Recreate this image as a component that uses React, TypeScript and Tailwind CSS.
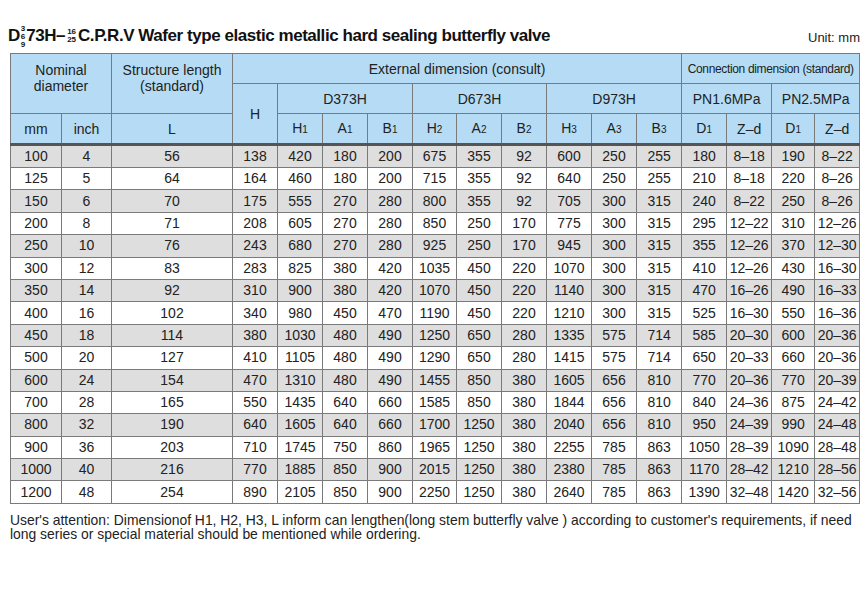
const rows: string[][] = [
  ["100", "4", "56", "138", "420", "180", "200", "675", "355", "92", "600", "250", "255", "180", "8–18", "190", "8–22"],
  ["125", "5", "64", "164", "460", "180", "200", "715", "355", "92", "640", "250", "255", "210", "8–18", "220", "8–26"],
  ["150", "6", "70", "175", "555", "270", "280", "800", "355", "92", "705", "300", "315", "240", "8–22", "250", "8–26"],
  ["200", "8", "71", "208", "605", "270", "280", "850", "250", "170", "775", "300", "315", "295", "12–22", "310", "12–26"],
  ["250", "10", "76", "243", "680", "270", "280", "925", "250", "170", "945", "300", "315", "355", "12–26", "370", "12–30"],
  ["300", "12", "83", "283", "825", "380", "420", "1035", "450", "220", "1070", "300", "315", "410", "12–26", "430", "16–30"],
  ["350", "14", "92", "310", "900", "380", "420", "1070", "450", "220", "1140", "300", "315", "470", "16–26", "490", "16–33"],
  ["400", "16", "102", "340", "980", "450", "470", "1190", "450", "220", "1210", "300", "315", "525", "16–30", "550", "16–36"],
  ["450", "18", "114", "380", "1030", "480", "490", "1250", "650", "280", "1335", "575", "714", "585", "20–30", "600", "20–36"],
  ["500", "20", "127", "410", "1105", "480", "490", "1290", "650", "280", "1415", "575", "714", "650", "20–33", "660", "20–36"],
  ["600", "24", "154", "470", "1310", "480", "490", "1455", "850", "380", "1605", "656", "810", "770", "20–36", "770", "20–39"],
  ["700", "28", "165", "550", "1435", "640", "660", "1585", "850", "380", "1844", "656", "810", "840", "24–36", "875", "24–42"],
  ["800", "32", "190", "640", "1605", "640", "660", "1700", "1250", "380", "2040", "656", "810", "950", "24–39", "990", "24–48"],
  ["900", "36", "203", "710", "1745", "750", "860", "1965", "1250", "380", "2255", "785", "863", "1050", "28–39", "1090", "28–48"],
  ["1000", "40", "216", "770", "1885", "850", "900", "2015", "1250", "380", "2380", "785", "863", "1170", "28–42", "1210", "28–56"],
  ["1200", "48", "254", "890", "2105", "850", "900", "2250", "1250", "380", "2640", "785", "863", "1390", "32–48", "1420", "32–56"],
];

const widths = [51, 50, 121, 45, 45, 45, 45, 44, 45, 45, 45, 45, 45, 45, 45, 43, 45];

const th = "border border-[#7a7a7a] bg-[#b5dcf4] font-normal text-center leading-[16px] p-0";
const td = "border border-[#7a7a7a] text-center p-0";

const Sub = ({ base, n }: { base: string; n: string }) => (
  <span>
    {base}
    <span className="text-[10px]">{n}</span>
  </span>
);

export default function App() {
  return (
    <div className="w-[865px] h-[604px] bg-white text-[#222] font-['Liberation_Sans',Arial,sans-serif]">
      <div className="flex items-end justify-between pl-[8px] pr-[5px] pt-[24px] h-[53px] pb-[5px]">
        <div className="flex items-center text-[17px] font-bold tracking-[-0.45px] leading-none text-[#111] mb-[-1px]">
          <span>D</span>
          <span className="flex flex-col text-[8px] leading-[8px] mx-[1px] mt-[3px] tracking-normal">
            <span>3</span>
            <span>6</span>
            <span>9</span>
          </span>
          <span>73H–</span>
          <span className="flex flex-col text-[8px] leading-[8px] mx-[2px] items-center tracking-normal">
            <span>16</span>
            <span>25</span>
          </span>
          <span>C.P.R.V Wafer type elastic metallic hard sealing butterfly valve</span>
        </div>
        <div className="text-[13px] leading-none mb-[4px]">Unit: mm</div>
      </div>

      <table className="ml-[10px] border-collapse table-fixed w-[849px] text-[14px]">
        <colgroup>
          {widths.map((w, i) => (
            <col key={i} style={{ width: w }} />
          ))}
        </colgroup>
        <thead>
          <tr className="h-[30px]">
            <th className={th} colSpan={2} rowSpan={2}>
              <div className="-mt-[12px]">
                Nominal
                <br />
                diameter
              </div>
            </th>
            <th className={th} rowSpan={2}>
              <div className="-mt-[12px]">
                Structure length
                <br />
                (standard)
              </div>
            </th>
            <th className={th} colSpan={10}>
              External dimension (consult)
            </th>
            <th className={th + " text-[12px] tracking-[-0.35px] whitespace-nowrap"} colSpan={4}>
              Connection dimension (standard)
            </th>
          </tr>
          <tr className="h-[30px]">
            <th className={th} rowSpan={2}>
              H
            </th>
            <th className={th} colSpan={3}>D373H</th>
            <th className={th} colSpan={3}>D673H</th>
            <th className={th} colSpan={3}>D973H</th>
            <th className={th} colSpan={2}>PN1.6MPa</th>
            <th className={th} colSpan={2}>PN2.5MPa</th>
          </tr>
          <tr className="h-[31px] border-b-[3px] border-b-[#555]">
            <th className={th}>mm</th>
            <th className={th}>inch</th>
            <th className={th}>L</th>
            <th className={th}><Sub base="H" n="1" /></th>
            <th className={th}><Sub base="A" n="1" /></th>
            <th className={th}><Sub base="B" n="1" /></th>
            <th className={th}><Sub base="H" n="2" /></th>
            <th className={th}><Sub base="A" n="2" /></th>
            <th className={th}><Sub base="B" n="2" /></th>
            <th className={th}><Sub base="H" n="3" /></th>
            <th className={th}><Sub base="A" n="3" /></th>
            <th className={th}><Sub base="B" n="3" /></th>
            <th className={th}><Sub base="D" n="1" /></th>
            <th className={th}>Z–d</th>
            <th className={th}><Sub base="D" n="1" /></th>
            <th className={th}>Z–d</th>
          </tr>
        </thead>
        <tbody>
          {rows.map((r, i) => (
            <tr key={i} className={i % 2 === 0 ? "h-[22.4px] bg-[#dedede]" : "h-[22.4px] bg-white"}>
              {r.map((c, j) => (
                <td key={j} className={td}>
                  {c}
                </td>
              ))}
            </tr>
          ))}
        </tbody>
      </table>

      <p className="pl-[10px] pr-[6px] pt-[9px] text-[13.9px] leading-[14px] text-[#222]">
        User's attention: Dimensionof H1, H2, H3, L inform can lengthen(long stem butterfly valve ) according to customer's requirements, if need long series or special material should be mentioned while ordering.
      </p>
    </div>
  );
}
